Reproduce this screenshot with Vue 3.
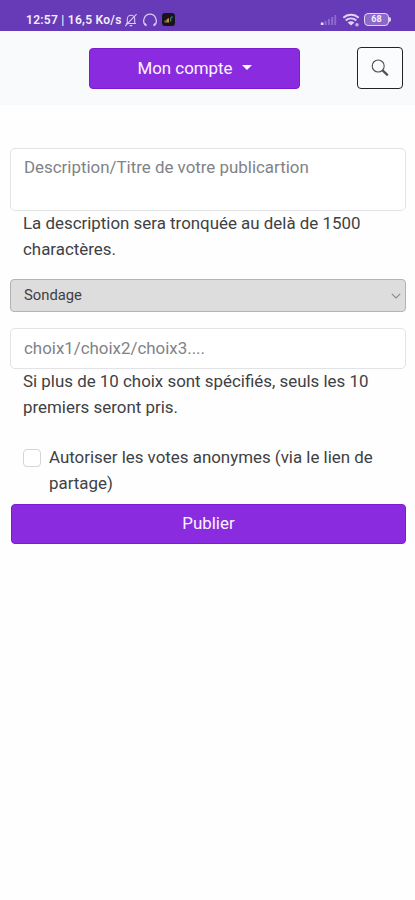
<script setup>
import { ref } from 'vue'

const description = ref('')
const choices = ref('')
const anonymous = ref(false)
</script>

<template>
  <div class="screen">
    <div class="status">
      <span class="clock">12:57 | 16,5 Ko/s</span>
      <svg class="bell" width="14" height="14" viewBox="0 0 14 14" fill="none" stroke="#d9c9f5" stroke-width="1.1">
        <path d="M2 10.5h10M3.3 10.3V6a3.7 3.7 0 0 1 7.4 0v4.3M5.7 12.6h2.6M1.2 13L12.6 1.2" />
      </svg>
      <svg class="headset" width="16" height="14" viewBox="0 0 16 14" fill="none" stroke="#d9c9f5" stroke-width="1.3">
        <path d="M3.600 12.400C1.600 10.500 1.300 7.500 2.300 5.200A6 6 0 0 1 13.700 5.200C14.700 7.500 14.400 10.500 12.400 12.400" />
        <path d="M2.600 10.700l1.800 1.900M13.400 10.700l-1.800 1.900" stroke-width="1.700" />
      </svg>
      <svg class="app" width="13" height="13" viewBox="0 0 13 13">
        <rect width="13" height="13" rx="3" fill="#17141c" />
        <path d="M2.500 9.500V7.500h2v2z" fill="#b9643c" />
        <path d="M4.500 9.500V6.500l2.500-1.500v4.500z" fill="#d58a3c" />
        <path d="M8 8.500V4.500h1.300v4z" fill="#38835f" />
        <path d="M9.300 5V3.200h1.200V5z" fill="#4b77b5" />
      </svg>
      <svg class="signal" width="17" height="12" viewBox="0 0 17 12">
        <path d="M.8 11V8.500h2.700V11z" fill="#e6daf8" />
        <path d="M4.600 11V7h2v4zM7.900 11V5h2v6zM11.200 11V3h2v8zM14.400 11V1h1.800v10z" fill="#8e6bcc" />
      </svg>
      <svg class="wifi" width="18" height="14" viewBox="0 0 18 14" fill="none" stroke="#e0d3f6" stroke-width="1.900">
        <path d="M1.300 4.800C5.500.7 12.500.7 16.700 4.800M3.700 7.500c3-2.800 7.600-2.800 10.600 0" />
        <path d="M5.600 9.400c1.900-1.500 4.900-1.500 6.800 0L9 12.600z" fill="#e0d3f6" stroke="none" />
        <circle cx="15" cy="11.700" r="1.800" fill="#c5afe9" stroke="none" />
      </svg>
      <div class="battery"><span>68</span></div>
    </div>

    <header class="nav">
      <button class="primary account">Mon compte<i class="caret"></i></button>
      <button class="search" aria-label="Rechercher">
        <svg width="18" height="18" viewBox="0 0 18 18" fill="none" stroke="#505050">
          <circle cx="7.200" cy="7" r="6" stroke-width="1.100" />
          <path d="M11.600 11.400l5.200 5" stroke-width="2.200" />
        </svg>
      </button>
    </header>

    <form class="form" @submit.prevent>
      <textarea v-model="description" class="field area" placeholder="Description/Titre de votre publicartion"></textarea>
      <p class="help">La description sera tronquée au delà de 1500<br>charactères.</p>
      <div class="select">
        <span>Sondage</span>
        <svg width="10" height="6" viewBox="0 0 10 6" fill="none" stroke="#888" stroke-width="1.100">
          <path d="M.8.8L5 4.900 9.200.8" />
        </svg>
      </div>
      <input v-model="choices" class="field choice" placeholder="choix1/choix2/choix3....">
      <p class="help">Si plus de 10 choix sont spécifiés, seuls les 10<br>premiers seront pris.</p>
      <label class="check">
        <input v-model="anonymous" type="checkbox">
        <span>Autoriser les votes anonymes (via le lien de<br>partage)</span>
      </label>
      <button class="primary publish">Publier</button>
    </form>
  </div>
</template>

<style>
body {
  background: #fff;
}
</style>

<style scoped>
* {
  box-sizing: border-box;
}

.screen {
  height: 900px;
  background: #fefefe;
  font-family: Roboto, "Liberation Sans", sans-serif;
  font-size: 16.900px;
  line-height: 25.5px;
  color: #3f4144;
}

button,
input,
textarea {
  margin: 0;
  font: inherit;
}

.status {
  display: flex;
  align-items: center;
  height: 31px;
  padding: 8px 24px 0 26px;
  background: #673ab7;
  color: #f3ecfd;
}

.clock {
  width: 97px;
  font-size: 12px;
  font-weight: 600;
  line-height: 14px;
  letter-spacing: 0.27px;
  white-space: nowrap;
}

.bell {
  margin-left: 1px;
}

.headset {
  margin-left: 4px;
}

.app {
  margin-left: 4px;
}

.signal {
  margin-left: auto;
}

.wifi {
  margin-left: 5px;
}

.battery {
  position: relative;
  width: 25px;
  height: 13px;
  margin: 0 2px 0 4px;
  border: 1.5px solid #e0d3f6;
  border-radius: 4px;
  background: #8c68cb;
  font-size: 9px;
  font-weight: 700;
  line-height: 11px;
  text-align: center;
}

.battery::after {
  content: "";
  position: absolute;
  top: 3px;
  right: -3px;
  width: 2px;
  height: 5px;
  border-radius: 0 2px 2px 0;
  background: #e0d3f6;
}

.nav {
  display: flex;
  align-items: flex-start;
  justify-content: space-between;
  height: 74px;
  padding: 16px 12px 0 89px;
  background: #f8fafc;
}

.primary {
  display: flex;
  align-items: center;
  justify-content: center;
  height: 40px;
  padding: 0;
  border: 1px solid #7d1bd0;
  border-radius: 4px;
  background: #8a2bdf;
  color: #fbf5ff;
}

.account {
  width: 211px;
  height: 41px;
  margin-top: 1px;
  padding-top: 1px;
}

.caret {
  margin: -3px 0 0 9px;
  border: 5px solid transparent;
  border-top-color: #fff;
  border-bottom: 0;
}

.search {
  display: flex;
  align-items: center;
  justify-content: center;
  width: 46px;
  height: 42px;
  padding: 0;
  border: 1.500px solid #212529;
  border-radius: 4px;
  background: #fafcfd;
}

.form {
  padding: 43px 9px 0 10px;
}

.field {
  display: block;
  width: 100%;
  padding: 6px 13px;
  border: 1px solid #e2e3e5;
  border-radius: 5px;
  outline: none;
  background: #fff;
  color: #3f4144;
  resize: none;
}

.field::placeholder {
  color: #808388;
  opacity: 1;
}

.area {
  height: 63px;
}

.choice {
  height: 41px;
  margin-top: 16px;
  padding: 5px 13px 7px;
}

.help {
  margin: 0;
  padding-left: 13px;
  white-space: nowrap;
}

.select {
  display: flex;
  align-items: center;
  justify-content: space-between;
  height: 33px;
  margin-top: 17px;
  padding: 0 4px 0 13px;
  border: 1px solid #b3b3b3;
  border-radius: 4px;
  background: #ddd;
  font-size: 14.800px;
}

.check {
  display: flex;
  margin-top: 25px;
  padding-left: 13px;
  white-space: nowrap;
}

.check input {
  appearance: none;
  flex: none;
  width: 18px;
  height: 18px;
  margin: 4px 8px 0 0;
  border: 1px solid #d4d5d7;
  border-radius: 4px;
  background: #fff;
}

.publish {
  width: calc(100% - 1px);
  margin: 8px 0 0 1px;
}
</style>
